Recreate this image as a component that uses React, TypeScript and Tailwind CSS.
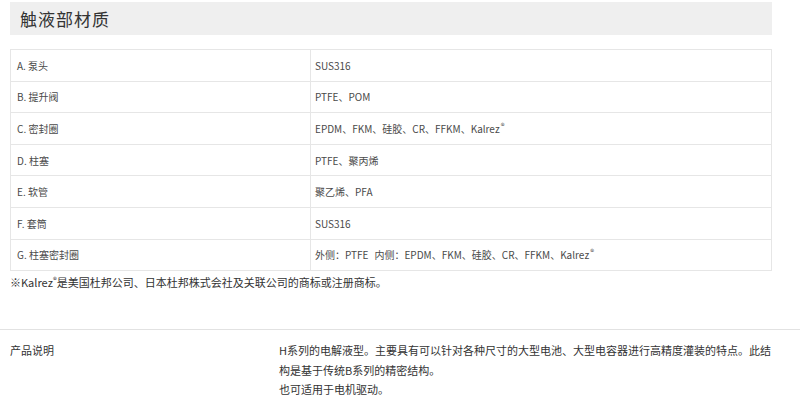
import React from 'react';

const Reg = () => <sup className="text-[8px] ml-[1px]">®</sup>;

const rows: [string, React.ReactNode][] = [
  ['A. 泵头', 'SUS316'],
  ['B. 提升阀', 'PTFE、POM'],
  ['C. 密封圈', <>EPDM、FKM、硅胶、CR、FFKM、Kalrez<Reg /></>],
  ['D. 柱塞', 'PTFE、聚丙烯'],
  ['E. 软管', '聚乙烯、PFA'],
  ['F. 套筒', 'SUS316'],
  ['G. 柱塞密封圈', <>外侧：PTFE<span className="ml-[6px]">内侧：EPDM、FKM、硅胶、CR、FFKM、Kalrez</span><Reg /></>],
];

export default function App() {
  return (
    <div className="w-[800px] h-[420px] bg-white overflow-hidden font-['Noto_Sans_CJK_SC','Noto_Sans',sans-serif] text-[#333]">
      {/* Section header */}
      <div className="pt-[2px] px-[10px]">
        <div className="w-[762px] h-[33px] bg-[#efefef] pl-[10px] flex items-center text-[17px] tracking-[1px] text-[#333]">
          触液部材质
        </div>

        {/* Materials table */}
        <table className="mt-[14px] w-[762px] border-collapse border border-[#e6e6e6] text-[10px] text-[#4a4a4a]">
          <tbody>
            {rows.map(([part, mat]) => (
              <tr key={part} className="h-[31.6px] border-b border-[#e6e6e6]">
                <td className="w-[300px] pl-[6px] border-r border-[#e6e6e6] align-middle">{part}</td>
                <td className="pl-[4px] align-middle">{mat}</td>
              </tr>
            ))}
          </tbody>
        </table>

        <p className="mt-[3px] text-[11px] leading-[16px] text-[#333]">
          ※Kalrez<sup className="text-[8px]">®</sup>是美国杜邦公司、日本杜邦株式会社及关联公司的商标或注册商标。
        </p>
      </div>

      {/* Product description */}
      <div className="mt-[39px] border-t border-[#e2e2e2] pt-[11px] flex text-[11px] leading-[19.5px] text-[#333]">
        <div className="w-[279px] pl-[10px] shrink-0">产品说明</div>
        <div className="w-[496px]">
          <p>H系列的电解液型。主要具有可以针对各种尺寸的大型电池、大型电容器进行高精度灌装的特点。此结构是基于传统B系列的精密结构。</p>
          <p>也可适用于电机驱动。</p>
        </div>
      </div>
    </div>
  );
}
